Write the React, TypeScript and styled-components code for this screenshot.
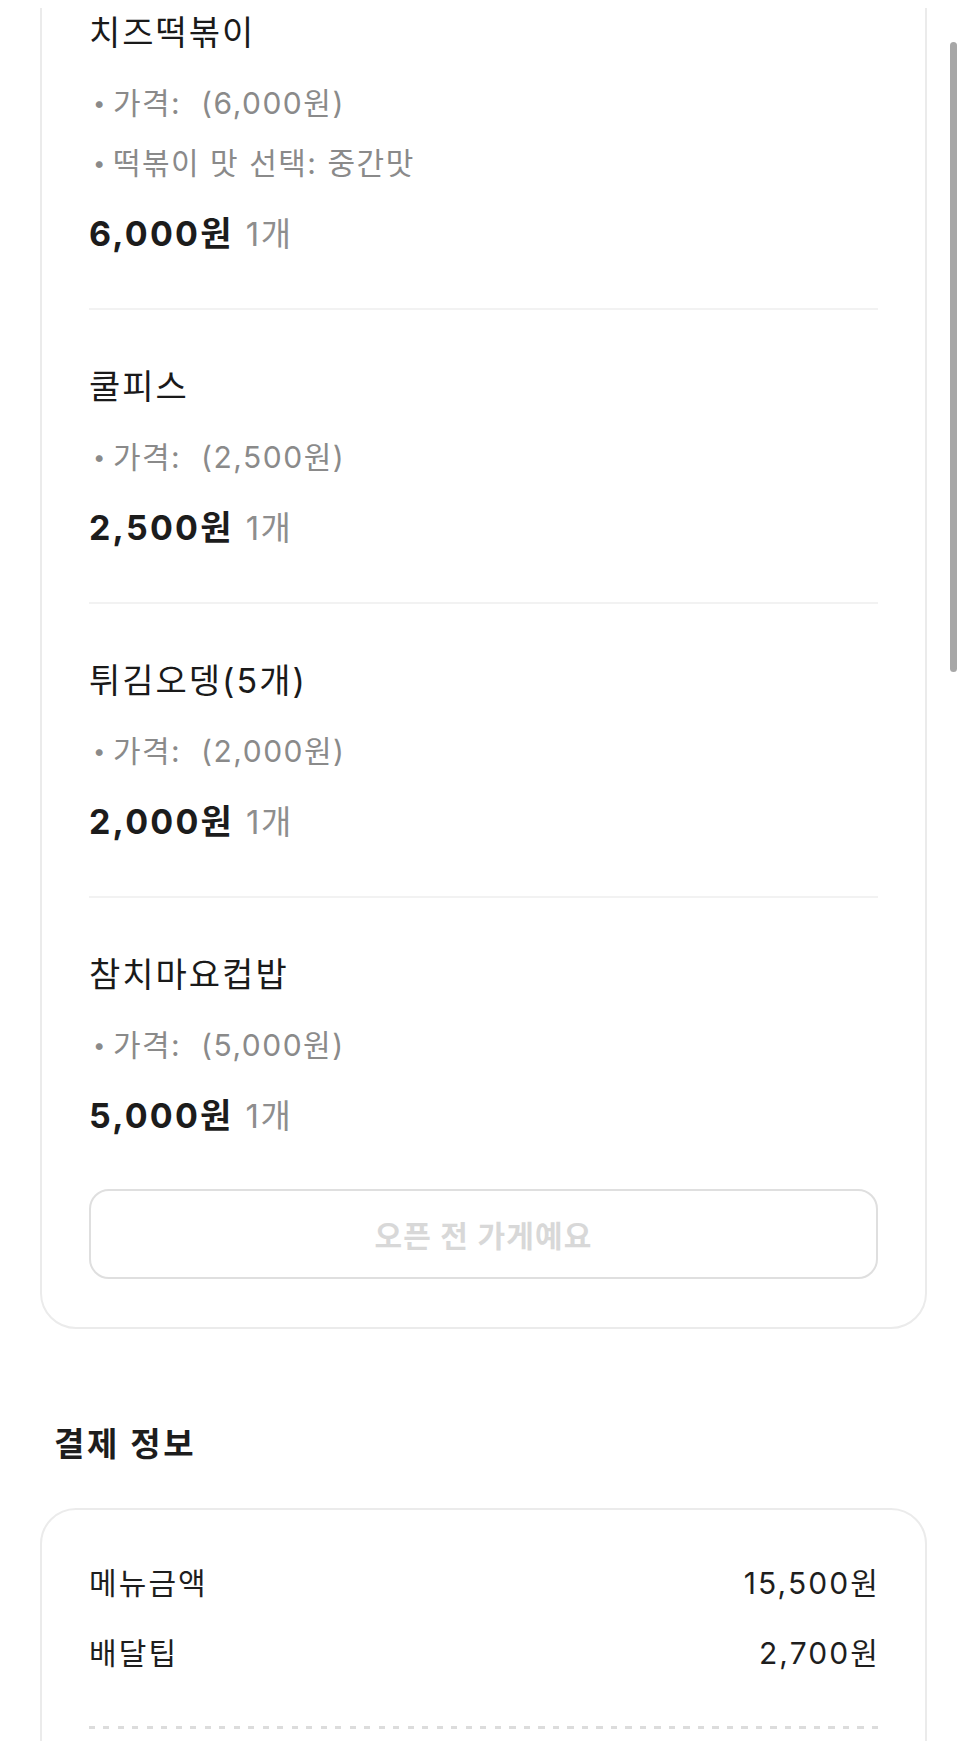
import styled, { createGlobalStyle } from 'styled-components';

const GlobalStyle = createGlobalStyle`
    html, body {
        margin: 0;
        padding: 0;
        background: #ffffff;
    }
    body {
        font-family: Inter, "Noto Sans CJK KR", sans-serif;
        color: #1b1b1b;
        overflow: hidden;
    }
    * {
        box-sizing: border-box;
    }
`;

const TopCover = styled.div`
    position: fixed;
    top: 0;
    left: 0;
    right: 0;
    height: 8px;
    background: #ffffff;
    z-index: 2;
`;

const ScrollThumb = styled.div`
    position: fixed;
    top: 42px;
    left: 950px;
    width: 7px;
    height: 630px;
    border-radius: 4px;
    background: #a7a7a7;
    z-index: 3;
`;

const Page = styled.main`
    display: flex;
    flex-direction: column;
    padding: 0 39px 80px 40px;
    margin-top: -46px;
`;

const Card = styled.section`
    border: 2px solid #ebebeb;
    border-radius: 36px;
    background: #ffffff;
`;

const OrderCard = styled(Card)`
    padding: 0 47px 48px 47px;
`;

const Item = styled.div`
    display: flex;
    flex-direction: column;
    padding: 55px 0 52px;
    border-bottom: 2px solid #f2f2f2;

    &:last-of-type {
        border-bottom: none;
        padding-bottom: 51px;
    }
`;

const ItemName = styled.h3`
    margin: 0 0 28px;
    font-size: 34px;
    line-height: 44px;
    font-weight: 400;
    letter-spacing: 2px;
    color: #1a1a1a;
`;

const OptionList = styled.ul`
    list-style: none;
    margin: 0 0 29px;
    padding: 0;
    display: flex;
    flex-direction: column;
    gap: 20px;
`;

const Option = styled.li`
    font-size: 30px;
    line-height: 40px;
    letter-spacing: 1.5px;
    color: #8a8a8a;
    padding-left: 4px;
    white-space: pre-wrap;

    &::before {
        content: '•';
        margin-right: 6px;
        font-size: 22px;
        vertical-align: 3px;
    }
`;

const PriceRow = styled.div`
    display: flex;
    align-items: baseline;
    gap: 12px;
    height: 44px;
    line-height: 44px;
`;

const Price = styled.strong`
    font-size: 34px;
    font-weight: 700;
    letter-spacing: 2.2px;
    color: #1c1c1c;
`;

const Count = styled.span`
    font-size: 33px;
    letter-spacing: 1.5px;
    color: #8e8e8e;
`;

const ClosedButton = styled.button`
    width: 100%;
    height: 90px;
    border: 2px solid #dfdfdf;
    border-radius: 20px;
    background: #ffffff;
    font-family: inherit;
    font-size: 30px;
    font-weight: 700;
    letter-spacing: 1.2px;
    color: #d8d8d8;
    cursor: default;
`;

const SectionTitle = styled.h2`
    margin: 95px 0 44px;
    padding-left: 14px;
    font-size: 33px;
    line-height: 40px;
    font-weight: 700;
    letter-spacing: 2.6px;
    color: #1d1d1d;
`;

const PaymentCard = styled(Card)`
    padding: 53px 47px 120px;
    display: flex;
    flex-direction: column;
    gap: 30px;
`;

const PaymentRow = styled.div`
    display: flex;
    justify-content: space-between;
    align-items: center;
    font-size: 30px;
    line-height: 40px;
    letter-spacing: 2.1px;
    color: #1e1e1e;

    > span:last-child {
        margin-right: -2px;
    }
`;

const Dashed = styled.div`
    height: 3px;
    margin-top: 23px;
    background-image: repeating-linear-gradient(
        to right,
        #dcdcdc 0,
        #dcdcdc 6px,
        transparent 6px,
        transparent 14.5px
    );
`;

type OrderItem = {
    name: string;
    options: string[];
    price: string;
    count: number;
};

const items: OrderItem[] = [
    { name: '치즈떡볶이', options: ['가격:  (6,000원)', '떡볶이 맛 선택: 중간맛'], price: '6,000원', count: 1 },
    { name: '쿨피스', options: ['가격:  (2,500원)'], price: '2,500원', count: 1 },
    { name: '튀김오뎅(5개)', options: ['가격:  (2,000원)'], price: '2,000원', count: 1 },
    { name: '참치마요컵밥', options: ['가격:  (5,000원)'], price: '5,000원', count: 1 },
];

const App = () => {
    return (
        <>
            <GlobalStyle />
            <TopCover />
            <ScrollThumb />
            <Page>
                <OrderCard>
                    {items.map((item) => (
                        <Item key={item.name}>
                            <ItemName>{item.name}</ItemName>
                            <OptionList>
                                {item.options.map((opt) => (
                                    <Option key={opt}>{opt}</Option>
                                ))}
                            </OptionList>
                            <PriceRow>
                                <Price>{item.price}</Price>
                                <Count>{item.count}개</Count>
                            </PriceRow>
                        </Item>
                    ))}
                    <ClosedButton disabled>오픈 전 가게예요</ClosedButton>
                </OrderCard>

                <SectionTitle>결제 정보</SectionTitle>
                <PaymentCard>
                    <PaymentRow>
                        <span>메뉴금액</span>
                        <span>15,500원</span>
                    </PaymentRow>
                    <PaymentRow>
                        <span>배달팁</span>
                        <span>2,700원</span>
                    </PaymentRow>
                    <Dashed />
                </PaymentCard>
            </Page>
        </>
    );
};

export default App;
